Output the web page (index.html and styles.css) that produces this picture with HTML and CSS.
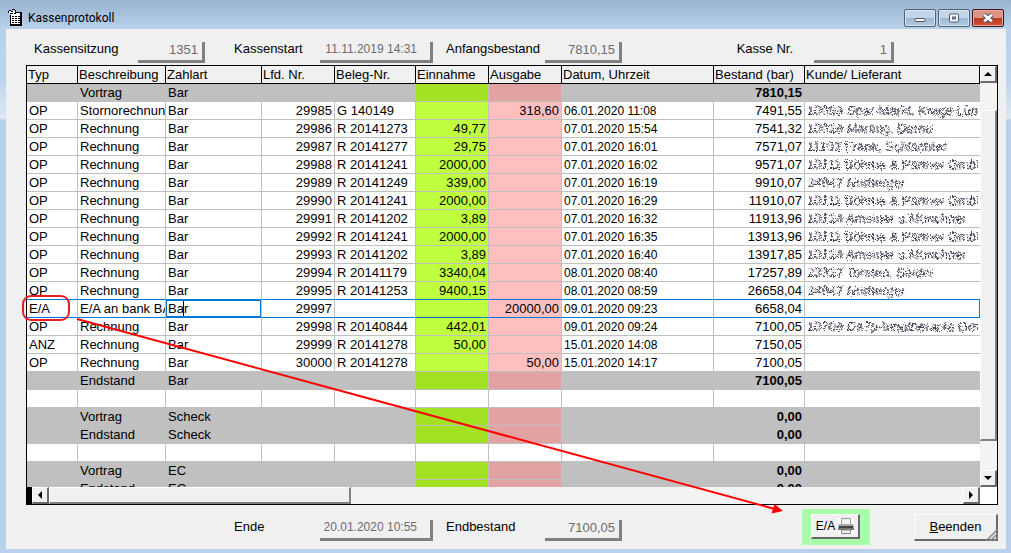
FILE: index.html
```html
<!DOCTYPE html>
<html lang="de">
<head>
<meta charset="utf-8">
<title>Kassenprotokoll</title>
<link rel="stylesheet" href="styles.css">
</head>
<body>
<svg class="defs" aria-hidden="true">
  <filter id="scramble" x="0" y="-10%" width="100%" height="120%">
    <feTurbulence type="fractalNoise" baseFrequency="0.7" numOctaves="2" seed="4" result="noise"/>
    <feDisplacementMap in="SourceGraphic" in2="noise" scale="6" xChannelSelector="R" yChannelSelector="G"/>
  </filter>
</svg>
<div class="window">
  <header class="titlebar">
    <svg class="app-icon" width="16" height="18" viewBox="0 0 16 18" shape-rendering="crispEdges" aria-hidden="true">
      <path d="M3 4h9v12H3z" fill="#fff"/>
      <path d="M2 6h1v11H2zM7 3h6v1H7zM12 3h2v14H2v-2h10z" fill="#000"/>
      <path d="M4 7.500h8M4 9.500h8M4 11.500h8M4 13.500h8" stroke="#000" stroke-dasharray="2 1"/>
      <path d="M1 2h6v3H1z" fill="#fff"/>
      <path d="M1 1h2v1H1zM4 0h3v1H4zM0 2h1v2H0zM7 1h1v2H7zM2 4h3v1H2zM6 4h2v1H6zM3 2h2v1H3z" fill="#000"/>
    </svg>
    <h1 class="title">Kassenprotokoll</h1>
    <div class="controls">
      <button class="ctl" aria-label="Minimieren"><svg width="12" height="12" viewBox="0 0 12 12"><rect x="1" y="6.500" width="10" height="3" rx="1" fill="#fff" stroke="#535666"/></svg></button>
      <button class="ctl" aria-label="Maximieren"><svg width="12" height="12" viewBox="0 0 12 12"><rect x="1.500" y="2" width="9" height="8" rx="1" fill="#fff" stroke="#535666"/><rect x="4.500" y="5" width="3" height="2" fill="#9db9d8" stroke="#535666"/></svg></button>
      <button class="ctl close" aria-label="Schließen"><svg width="14" height="12" viewBox="0 0 14 12"><path d="M3 2.500l8 7M11 2.500l-8 7" stroke="#535666" stroke-width="4.500"/><path d="M3.200 2.700l7.600 6.600M10.800 2.700l-7.600 6.600" stroke="#fff" stroke-width="2.500"/></svg></button>
    </div>
  </header>
  <main class="client">
    <div class="fields top">
      <label for="sitzung">Kassensitzung</label><input id="sitzung" class="c2" value="1351" readonly>
      <label class="c3" for="start">Kassenstart</label><input id="start" class="c4 date" value="11.11.2019 14:31" readonly>
      <label class="c5" for="anfang">Anfangsbestand</label><input id="anfang" class="c6" value="7810,15" readonly>
      <label class="c7" for="kasse">Kasse Nr.</label><input id="kasse" class="c8" value="1" readonly>
    </div>
    <div class="grid">
      <div class="rows">
        <table>
          <colgroup><col class="w-typ"><col class="w-bes"><col class="w-zahl"><col class="w-lfd"><col class="w-bel"><col class="w-ein"><col class="w-ein"><col class="w-dat"><col class="w-bst"><col></colgroup>
          <thead><tr><th>Typ</th><th>Beschreibung</th><th>Zahlart</th><th>Lfd. Nr.</th><th>Beleg-Nr.</th><th>Einnahme</th><th>Ausgabe</th><th>Datum, Uhrzeit</th><th>Bestand (bar)</th><th>Kunde/ Lieferant</th></tr></thead>
          <tbody id="entries"></tbody>
        </table>
      </div>
      <div class="vbar">
        <button class="sb" aria-label="Nach oben"><svg width="8" height="4" viewBox="0 0 8 4"><path d="M0 4L4 0l4 4z"/></svg></button>
        <div class="track"><div class="thumb"></div></div>
        <button class="sb" aria-label="Nach unten"><svg width="8" height="4" viewBox="0 0 8 4"><path d="M0 0h8L4 4z"/></svg></button>
      </div>
      <div class="hbar">
        <button class="sb" aria-label="Nach links"><svg width="4" height="8" viewBox="0 0 4 8"><path d="M4 0v8L0 4z"/></svg></button>
        <div class="track"><div class="thumb"></div></div>
        <button class="sb" aria-label="Nach rechts"><svg width="4" height="8" viewBox="0 0 4 8"><path d="M0 0v8l4-4z"/></svg></button>
      </div>
      <div class="corner"></div>
    </div>
    <div class="fields bottom">
      <label class="c3" for="ende">Ende</label><input id="ende" class="c4 date" value="20.01.2020 10:55" readonly>
      <label class="c5" for="endbestand">Endbestand</label><input id="endbestand" class="c6" value="7100,05" readonly>
      <div class="actions">
        <div class="mark"><button class="btn print">E/A
          <svg width="16" height="16" viewBox="0 0 16 16" aria-hidden="true">
            <path d="M0 0h16v16H0z" fill="#fff"/>
            <path d="M3.500.5h9V7h-9z" fill="#f4f4f4" stroke="#999"/>
            <path d="M1 6h14l1 2v4H0V8z" fill="#aaa"/>
            <path d="M1 8h14v2H1z" fill="#444"/><path d="M0 10h16v2H0z" fill="#777"/>
            <path d="M3.500 12h9v3.500h-9z" fill="#eee" stroke="#888"/>
          </svg></button></div>
        <button class="btn end"><span><u>B</u>eenden</span></button>
      </div>
    </div>
    <svg class="grip" width="12" height="12" viewBox="0 0 12 12" aria-hidden="true"><path d="M0 12L12 0M4 12l8-8M8 12l4-4" stroke="#888" stroke-width="1.500"/></svg>
  </main>
  <svg class="notes" width="1011" height="553" viewBox="0 0 1011 553" aria-hidden="true">
    <rect x="23" y="296" width="46" height="24" rx="8" fill="none" stroke="#ed1c24" stroke-width="2"/>
    <path d="M77 319L775 509" stroke="#f00" stroke-width="2"/>
    <path d="M783 511l-8.500-7-3 9.500z" fill="#f00"/>
  </svg>
</div>
<script src="rows.js"></script>
</body>
</html>
```
FILE: styles.css
```css
* { box-sizing: border-box; }
html, body { height: 100%; margin: 0; }
body { font: 13px/18px "Liberation Sans", Arial, sans-serif; color: #000; }
.defs { position: absolute; width: 0; height: 0; }
.window {
  position: relative; display: flex; flex-direction: column; height: 100vh; overflow: hidden;
  padding: 0 5px 4px 6px;
  background: linear-gradient(#98b3d1 0, #b9d1ea 29px, #bcd4ec 80px, #dce9f5 118px, #b9d1ea 120px);
}
.titlebar { display: flex; align-items: center; height: 29px; padding: 6px 2px 0 2px; flex: none; }
.title { flex: 1; margin: 0 0 0 4px; font: 12px/16px Roboto, "Open Sans", sans-serif; }
.controls { display: flex; gap: 2px; }
.ctl {
  display: flex; align-items: center; justify-content: center; width: 32px; height: 18px; padding: 0;
  border: 1px solid #52617a; border-radius: 2px; box-shadow: inset 0 0 0 1px #d7e4f2;
  background: linear-gradient(#c3d5e9 50%, #9bb5d2 50%, #b5cbe3);
}
.close { border-color: #43141a; box-shadow: inset 0 0 0 1px #e0a89c; background: linear-gradient(#dd9484 50%, #b9381c 50%, #d0553a); }
.client { position: relative; flex: 1; min-height: 0; display: flex; flex-direction: column; padding: 0 8px 0 20px; background: #f0f0f0; }
.fields { display: grid; grid-template-columns: 103px 97px 86px 126px 99px 79px 1fr 82px 110px; flex: none; align-items: center; }
.top { height: 36px; padding: 5px 0 2px 8px; margin-right: -8px; }
.fields label { grid-column: 1; grid-row: 1; }
.fields .c3 { grid-column: 3; }
.fields .c5 { grid-column: 5; }
.fields .c7 { grid-column: 7; justify-self: end; padding-right: 21px; }
.fields input {
  grid-row: 1; align-self: end; height: 21px; padding: 0 4px 4px 0; min-width: 0; border: solid #808080; border-width: 0 3px 3px 0;
  background: #f0f0f0; color: #6d6d6d; font: inherit; text-align: right; outline: 0;
}
.fields .c2 { grid-column: 2; width: 67px; margin-left: 1px; }
.fields .c4 { grid-column: 4; width: 113px; padding-right: 13px; }
.fields .c6 { grid-column: 6; width: 77px; }
.fields .c8 { grid-column: 8; width: 80px; }
.fields .date { font-size: 12px; }
.bottom { grid-template: 28px / 103px 97px 86px 126px 99px 79px 1fr; height: 44px; padding: 8px 0 8px 8px; }
.actions { grid-column: 7; grid-row: 1; display: flex; justify-content: flex-end; align-items: center; gap: 44px; }
.mark { padding: 5px 10px 6px 9px; background: #afa; }
.btn {
  display: flex; align-items: center; justify-content: center; padding: 0; background: #f0f0f0; color: #000; font: inherit;
  border: solid; border-width: 1px 2px 2px 1px; border-color: #fff #696969 #696969 #fff;
}
.print { width: 49px; height: 25px; gap: 3px; font-size: 12px; }
.end { width: 84px; height: 27px; }
.grip { position: absolute; right: 8px; bottom: 8px; }
.grid {
  flex: 1; min-height: 0; display: grid; grid-template: 1fr 17px / 1fr 17px; overflow: hidden;
  border: 1px solid #000;
}
.rows { overflow: hidden; min-height: 0; background: #fff; }
table { width: 100%; table-layout: fixed; border-collapse: separate; border-spacing: 0; }
.w-typ { width: 51px; } .w-bes { width: 88px; } .w-zahl { width: 96px; } .w-lfd { width: 73px; }
.w-bel { width: 81px; } .w-ein { width: 73px; } .w-dat { width: 152px; } .w-bst { width: 91px; }
th, td { height: 18px; padding: 0 2px; overflow: hidden; white-space: nowrap; line-height: 17px; text-align: left; border: solid #c0c0c0; border-width: 0 1px 1px 0; }
th { padding: 0 1px; font-weight: normal; background: #f0f0f0; border-color: #000; }
td:nth-child(2) { padding-right: 0; }
td:last-child { border-right: 0; }
.num { text-align: right; }
.date-cell { padding-top: 1px; font-size: 12px; line-height: 16px; }
.in { background: #bfff3f; }
.out { background: #ffbfbf; }
.sum td { background: #c0c0c0; }
.sum .in { background: #a2e222; }
.sum .out { background: #e2a2a2; }
.sum .num { font-weight: bold; }
.before-current td, .current td { border-bottom-color: #0078d7; }
.current td:last-child { border-right: 1px solid #0078d7; }
.current .focus { padding: 0; }
.edit {
  display: block; width: 100%; height: 17px; padding: 0 1px; border: 1px solid #0078d7; font: inherit; color: #000; outline: 0;
  background: linear-gradient(#000, #000) 16px 0 / 1px 100% no-repeat #fff;
}
.scrambled { display: block; height: 17px; overflow: hidden; filter: url(#scramble); color: #445; }
.track { flex: 1; min-width: 0; min-height: 0; background: repeating-conic-gradient(#fff 0 25%, #eaeaea 0 50%) 0 0 / 2px 2px; }
.vbar { display: flex; flex-direction: column; }
.hbar { display: flex; border-left: 5px solid #000; }
.sb {
  display: flex; align-items: center; justify-content: center; width: 17px; height: 17px; flex: none; padding: 0;
  background: #f0f0f0; border: solid; border-width: 1px 2px 2px 1px; border-color: #fff #696969 #696969 #fff;
}
.thumb { background: #f0f0f0; border: solid; border-width: 1px 2px 2px 1px; border-color: #fff #808080 #808080 #fff; }
.vbar .track { padding-top: 27px; }
.vbar .thumb { height: 92%; }
.hbar .thumb { width: 33%; height: 100%; }
.corner { background: #fff; }
.notes { position: absolute; left: 0; top: 0; pointer-events: none; }
```
FILE: rows.js
```js
const rows = [
  ["", "Vortrag", "Bar", "", "", "", "", "", "7810,15", "", "sum"],
  ["OP", "Stornorechnung", "Bar", "29985", "G 140149", "", "318,60", "06.01.2020 11:08", "7491,55", "10093 Spar-Markt, Krage Lübbe"],
  ["OP", "Rechnung", "Bar", "29986", "R 20141273", "49,77", "", "07.01.2020 15:54", "7541,32", "10026 Marting, Dernd"],
  ["OP", "Rechnung", "Bar", "29987", "R 20141277", "29,75", "", "07.01.2020 16:01", "7571,07", "11102 Frank, Schlachter"],
  ["OP", "Rechnung", "Bar", "29988", "R 20141241", "2000,00", "", "07.01.2020 16:02", "9571,07", "10111 Böhme & Partner GmbH"],
  ["OP", "Rechnung", "Bar", "29989", "R 20141249", "339,00", "", "07.01.2020 16:19", "9910,07", "34847 Nurberger"],
  ["OP", "Rechnung", "Bar", "29990", "R 20141241", "2000,00", "", "07.01.2020 16:29", "11910,07", "10111 Böhme & Partner GmbH"],
  ["OP", "Rechnung", "Bar", "29991", "R 20141202", "3,89", "", "07.01.2020 16:32", "11913,96", "10124 Ameiner u.Münchner"],
  ["OP", "Rechnung", "Bar", "29992", "R 20141241", "2000,00", "", "07.01.2020 16:35", "13913,96", "10111 Böhme & Partner GmbH"],
  ["OP", "Rechnung", "Bar", "29993", "R 20141202", "3,89", "", "07.01.2020 16:40", "13917,85", "10124 Ameiner u.Münchner"],
  ["OP", "Rechnung", "Bar", "29994", "R 20141179", "3340,04", "", "08.01.2020 08:40", "17257,89", "23327 Torsten, Seidel"],
  ["OP", "Rechnung", "Bar", "29995", "R 20141253", "9400,15", "", "08.01.2020 08:59", "26658,04", "34847 Nurberger", "before-current"],
  ["E/A", "E/A an bank BAR", "Bar", "29997", "", "", "20000,00", "09.01.2020 09:23", "6658,04", "", "current"],
  ["OP", "Rechnung", "Bar", "29998", "R 20140844", "442,01", "", "09.01.2020 09:24", "7100,05", "10706 Da7p-Innotherapie Gmb"],
  ["ANZ", "Rechnung", "Bar", "29999", "R 20141278", "50,00", "", "15.01.2020 14:08", "7150,05", ""],
  ["OP", "Rechnung", "Bar", "30000", "R 20141278", "", "50,00", "15.01.2020 14:17", "7100,05", ""],
  ["", "Endstand", "Bar", "", "", "", "", "", "7100,05", "", "sum"],
  ["", "", "", "", "", "", "", "", "", "", "blank"],
  ["", "Vortrag", "Scheck", "", "", "", "", "", "0,00", "", "sum"],
  ["", "Endstand", "Scheck", "", "", "", "", "", "0,00", "", "sum"],
  ["", "", "", "", "", "", "", "", "", "", "blank"],
  ["", "Vortrag", "EC", "", "", "", "", "", "0,00", "", "sum"],
  ["", "Endstand", "EC", "", "", "", "", "", "0,00", "", "sum"]
];
const classes = ["", "", "", "num", "", "num in", "num out", "date-cell", "num", ""];
const body = document.getElementById("entries");
for (const row of rows) {
  const kind = row[10] || "";
  const tr = body.insertRow();
  tr.className = kind;
  classes.forEach((name, i) => {
    const td = tr.insertCell();
    if (kind !== "blank") td.className = name;
    if (kind === "current" && i === 2) {
      td.className = "focus";
      const input = document.createElement("input");
      input.className = "edit";
      input.value = row[i];
      input.setAttribute("aria-label", "Zahlart");
      td.append(input);
    } else if (i === 9 && row[i]) {
      const span = document.createElement("span");
      span.className = "scrambled";
      span.textContent = row[i];
      td.append(span);
    } else {
      td.textContent = row[i];
    }
  });
}
```
